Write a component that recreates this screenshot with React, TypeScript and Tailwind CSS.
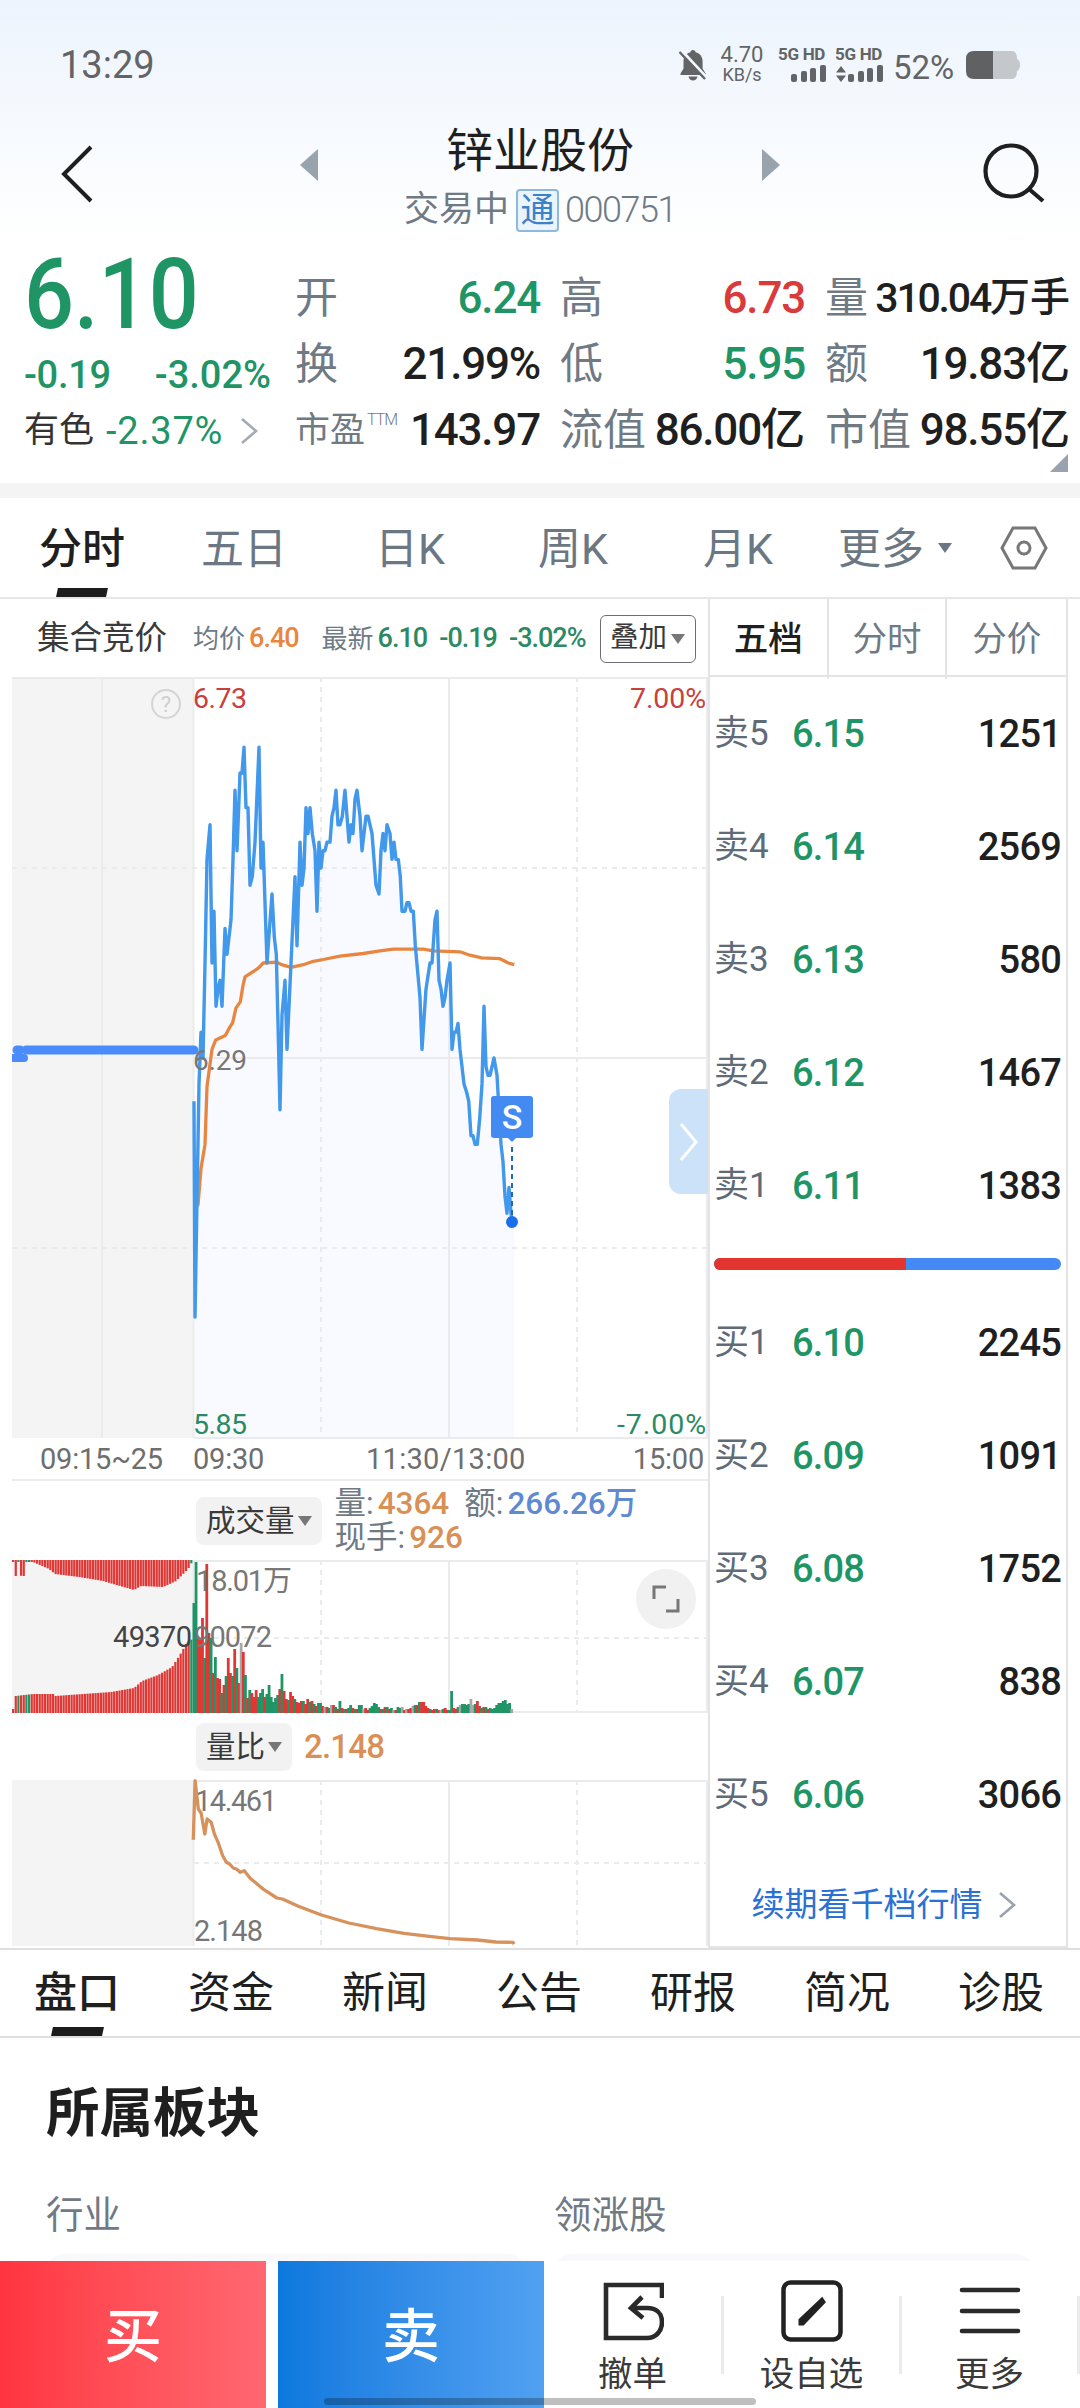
import React from 'react';

const quoteCells = [
  { label: '开', value: '6.24', color: 'text-[#1f9566]' },
  { label: '高', value: '6.73', color: 'text-[#d93a3a]' },
  { label: '量', value: '310.04', unit: '万手', color: 'text-[#1f1f1f]', small: true },
  { label: '换', value: '21.99%', color: 'text-[#1f1f1f]' },
  { label: '低', value: '5.95', color: 'text-[#1f9566]' },
  { label: '额', value: '19.83', unit: '亿', color: 'text-[#1f1f1f]' },
  { label: '市盈', sup: 'TTM', value: '143.97', color: 'text-[#1f1f1f]' },
  { label: '流值', value: '86.00', unit: '亿', color: 'text-[#1f1f1f]' },
  { label: '市值', value: '98.55', unit: '亿', color: 'text-[#1f1f1f]' },
];

const asks = [
  ['卖5', '6.15', '1251'],
  ['卖4', '6.14', '2569'],
  ['卖3', '6.13', '580'],
  ['卖2', '6.12', '1467'],
  ['卖1', '6.11', '1383'],
];

const bids = [
  ['买1', '6.10', '2245'],
  ['买2', '6.09', '1091'],
  ['买3', '6.08', '1752'],
  ['买4', '6.07', '838'],
  ['买5', '6.06', '3066'],
];

// [x in thirds of a pixel, ticks above the previous close]
const pricePoints = [
  [42, -5], [45, -30], [57, -3], [63, 3], [69, 0], [75, 11], [81, 23], [90, 27], [96, 11], [102, 17], [108, 6],
  [114, 8], [120, 9], [126, 6], [135, 15], [141, 12], [147, 14], [153, 16], [159, 23], [165, 31], [171, 24],
  [180, 33], [186, 33], [192, 36], [198, 29], [204, 29], [210, 20], [217, 21], [225, 25], [237, 36], [243, 22],
  [249, 25], [261, 11], [276, 19], [283, 14], [289, 12], [294, 4], [300, -6], [306, 5], [315, 9], [321, 1],
  [333, 11], [345, 21], [351, 13], [360, 25], [366, 20], [372, 22], [378, 29], [384, 26], [390, 29], [397, 26],
  [405, 24], [411, 17], [417, 25], [423, 22], [429, 24], [435, 24], [441, 25], [450, 25], [456, 28], [462, 29],
  [468, 31], [474, 27], [480, 27], [487, 28], [495, 31], [507, 25], [513, 27], [519, 26], [525, 30], [531, 31],
  [540, 28], [546, 24], [552, 26], [558, 28], [564, 28], [570, 27], [576, 26], [588, 20], [597, 19], [603, 24],
  [609, 26], [615, 24], [621, 27], [630, 26], [636, 23], [642, 25], [648, 23], [655, 23], [661, 21], [666, 17],
  [675, 17], [681, 18], [687, 18], [693, 17], [700, 17], [706, 13], [720, 7], [726, 1], [738, 8], [750, 11],
  [756, 11], [765, 16], [771, 17], [777, 9], [783, 8], [789, 6], [795, 7], [801, 9], [810, 11], [816, 1],
  [822, 3], [828, 3], [834, 4], [840, 1], [852, -3], [860, -4], [866, -5], [873, -9], [879, -9], [885, -10],
  [892, -10], [899, -7], [906, -3], [912, 6], [918, -1], [924, -2], [930, -2], [942, 0], [951, -2], [957, -6],
  [963, -10], [969, -12], [975, -16], [981, -18], [987, -15], [993, -18], [996, -19],
];

const avgPoints = [
  [48, -17], [54, -17], [63, -12.8], [75, -10], [81, -3.3], [96, 1], [107, 2.1], [136, 2.6], [150, 3.6],
  [158, 4.1], [168, 5.8], [181, 6.5], [189, 8.4], [195, 9.4], [235, 10.4], [250, 11], [290, 11.1], [305, 10.8],
  [333, 10.5], [370, 10.8], [400, 11.2], [430, 11.4], [480, 11.8], [550, 12.1], [600, 12.4], [640, 12.6],
  [730, 12.6], [760, 12.4], [840, 12.3], [870, 11.9], [905, 11.6], [960, 11.5], [985, 11], [1003, 10.8],
];

const toLine = (pts: number[][]) =>
  pts.map(([x, t]) => `${((x + 504) / 3).toFixed(1)},${(381 - t * 8.636).toFixed(1)}`).join(' ');

// one entry per traded minute: height, then r (up), g (down) or n (flat)
const volumeBars = (
  '110g 151g 75r 75r 95r 55g 149r 80r 75g 40r 56g 35r 34r 20g 28r 37g 55r 40r 37g 64r 45g 30r 70n 61r 38g ' +
  '15r 23g 20r 16r 23r 16g 20g 24g 16r 19g 28g 16g 11g 15g 18g 24r 39g 22r 14r 13g 21r 17r 14g 11r 10r 12r 12g ' +
  '9r 14r 11g 12r 9g 7r 10g 10g 7r 6n 6r 5g 8n 8r 6g 4r 12g 5r 4g 4r 5g 8g 5r 4g 4r 8g 8g 4n 5r 3r 5g 7g 10g ' +
  '9g 6g 4r 4g 6r 6g 4r 5g 3n 3r 6g 5g 6n 3r 4n 4r 5r 7n 8g 8r 11g 11r 11r 7r 5r 4g 3r 4r 4g 3r 3n 4g 5r 3r 3g 22g ' +
  '5r 4r 6g 8n 9g 9g 8g 9g 14n 8n 9g 12r 7r 5g 6r 6g 4r 5g 4g 5g 8g 10g 10g 12g 13g 9g 10g 4n'
).split(' ');

const volumeColor = { r: '#e03735', g: '#1f9566', n: '#a8a8a8' } as Record<string, string>;

const interpolate = (stops: number[][], x: number) => {
  const i = Math.max(1, stops.findIndex((s) => s[0] >= x));
  const [x0, y0] = stops[i - 1];
  const [x1, y1] = stops[i];
  return y0 + ((y1 - y0) * (x - x0)) / (x1 - x0);
};

const auctionTop = [
  [0, 2], [2, 2], [2.5, 16], [3, 16], [4, 2], [7, 2], [8, 16], [12, 16], [13, 2], [20, 2], [36, 9], [42, 14], [66, 17],
  [90, 21], [100, 24], [121, 30], [128, 26], [150, 27], [163, 21], [175, 9], [179, 2], [190, 2],
];
const auctionBottom = [
  [0, 4], [2, 4], [2.5, 17], [20, 19], [40, 19], [42, 17], [70, 19], [98, 21], [121, 25], [129, 32], [145, 38],
  [159, 46], [168, 60], [174, 71], [190, 80],
];

const ratioPoints = [
  [421, 362], [425, 185], [432, 270], [438, 282], [446, 345], [451, 300], [460, 310], [467, 345], [475, 370],
  [485, 410], [493, 430], [500, 435], [508, 447], [515, 450], [523, 460], [532, 455], [545, 478], [575, 512],
  [603, 537], [615, 540], [650, 562], [700, 588], [760, 612], [820, 629], [880, 643], [940, 653], [980, 659],
  [1040, 663], [1080, 669], [1117, 670], [1120, 675],
].map(([x, y]) => `${(x / 2.178 - 12).toFixed(1)},${(y / 3 - 61).toFixed(1)}`).join(' ');

const Caret = ({ className = '' }: { className?: string }) => (
  <svg className={className} width="14" height="10" viewBox="0 0 14 10">
    <path d="M0 0h14L7 10z" fill="currentColor" />
  </svg>
);

const ChevronRight = ({ className = '' }: { className?: string }) => (
  <svg className={className} width="18" height="28" viewBox="0 0 18 28" fill="none">
    <path d="M2 2l14 12L2 26" stroke="currentColor" strokeWidth="2.6" />
  </svg>
);

const StatusBar = () => (
  <div className="flex h-[130px] items-center pl-[60px] pr-[60px] text-[#626466]">
    <span className="text-[38px] leading-none">13:29</span>
    <div className="ml-auto flex items-center">
      <svg width="30" height="32" viewBox="0 0 30 32" fill="currentColor">
        <path d="M15 1c1.500 0 2.600 1 2.600 2.300 4.600 1.200 7 4.700 7 9.200v7l3 5v1.500H2.500V24.500l3-5v-7C5.500 8 8 4.500 12.400 3.300 12.400 2 13.500 1 15 1z" />
        <path d="M10.500 27.500h9c-.5 2.500-2.300 4-4.500 4s-4-1.500-4.500-4z" />
        <path d="M4 2l25 27" stroke="#f4f8fd" strokeWidth="3" />
        <path d="M1.500 3l25.500 27" stroke="currentColor" strokeWidth="2.400" />
      </svg>
      <div className="ml-[10px] flex w-[48px] flex-col text-center">
        <span className="text-[22px] leading-[20px]">4.70</span>
        <span className="text-[18px] leading-[20px]">KB/s</span>
      </div>
      <div className="ml-3 flex gap-2">
        {[0, 1].map((i) => (
          <div key={i} className="flex flex-col items-end gap-[5px]">
            <span className="w-[49px] whitespace-nowrap text-[17px] font-bold leading-[12px] tracking-[-0.3px]">5G HD</span>
            <svg width="49" height="18" viewBox="0 0 49 18" fill="currentColor">
              {i === 1 && <path d="M6 1l5 6.500H1zM6 17l5-6.500H1z" />}
              <rect x="13" y="9" width="6" height="8" rx="2" />
              <rect x="23" y="6" width="6" height="11" rx="2" />
              <rect x="32" y="3" width="6" height="14" rx="2" />
              <rect x="42" y="0" width="6" height="17" rx="2" />
            </svg>
          </div>
        ))}
      </div>
      <span className="ml-[9px] mt-1 w-[65px] whitespace-nowrap text-[33px] leading-none">52%</span>
      <svg className="ml-2" width="54" height="28" viewBox="0 0 54 28">
        <path d="M8 0h38q5 0 5 8q3 1 3 6t-3 6q0 8-5 8H27V0z" fill="#c4c8cd" />
        <path d="M27 0H8Q0 0 0 8v12q0 8 8 8h19z" fill="#5f6163" />
      </svg>
    </div>
  </div>
);

const TitleBar = () => (
  <div className="flex h-[114px] justify-between pl-[60px] pr-[34px]">
    <svg className="mt-[14px]" width="34" height="60" viewBox="0 0 34 60" fill="none">
      <path d="M31 3L4 30l27 27" stroke="#1f1f1f" strokeWidth="4" />
    </svg>
    <div className="ml-[4px] flex w-[480px] justify-between">
      <svg className="mt-[19px]" width="18" height="32" viewBox="0 0 18 32">
        <path d="M18 0v32L0 16z" fill="#99a3ad" />
      </svg>
      <div className="flex flex-col items-center">
        <h1 className="mt-[-4px] text-[47px] leading-[50px] text-[#1f1f1f]">锌业股份</h1>
        <div className="mt-[12px] flex items-center text-[35px] leading-[44px] text-[#6f7a85]">
          <span>交易中</span>
          <span className="ml-[7px] flex size-[43px] items-center justify-center rounded border-2 border-[#8db8e0] bg-[#eaf4fd] text-[34px] leading-none text-[#3b82c8]">通</span>
          <span className="ml-[6px] text-[36px] font-light tracking-[-1.5px]">000751</span>
        </div>
      </div>
      <svg className="mt-[19px]" width="18" height="32" viewBox="0 0 18 32">
        <path d="M0 0v32l18-16z" fill="#99a3ad" />
      </svg>
    </div>
    <svg className="mt-[12px]" width="64" height="62" viewBox="0 0 64 62" fill="none" stroke="#1f1f1f" strokeWidth="4.200">
      <circle cx="29" cy="29" r="25.500" />
      <path d="M47 47l14 12" />
    </svg>
  </div>
);

const Quote = () => (
  <section className="flex h-[239px] pl-[24px] pr-[10px]">
    <div className="w-[271px] shrink-0 text-[#1f9566]">
      <div className="mt-[-1px] h-[102px] origin-left scale-x-[.89] text-[99px] font-medium leading-[102px]">6.10</div>
      <div className="mt-[7px] flex h-[46px] items-center text-[38px] font-medium">
        <span className="tracking-[-0.3px]">-0.19</span>
        <span className="ml-[44px]">-3.02%</span>
      </div>
      <div className="mt-[9px] flex h-[48px] items-center text-[35px] text-[#333]">
        <span>有色</span>
        <span className="ml-[12px] text-[38px] tracking-[0.8px] text-[#1f9566]">-2.37%</span>
        <ChevronRight className="ml-[17px] text-[#a3acb5]" />
      </div>
    </div>
    <div className="relative mt-[21px] grid h-[198px] flex-1 grid-cols-3 gap-x-5">
      {quoteCells.map((c) => (
        <div key={c.label} className="flex h-[66px] items-center justify-between whitespace-nowrap leading-none">
          <span className={c.sup ? 'flex text-[35px] text-[#6f7a85]' : 'text-[43px] text-[#6f7a85]'}>
            {c.label}
            {c.sup && <sup className="ml-[2px] mt-[7px] text-[16px] font-light leading-none tracking-[-1px]">{c.sup}</sup>}
          </span>
          <span className={`flex items-center font-medium ${c.color}`}>
            <span className={c.small ? 'text-[41px] tracking-[-2.2px]' : 'text-[44px] tracking-[-1.2px]'}>{c.value}</span>
            {c.unit && <span className={c.small ? 'text-[40px]' : 'text-[44px]'}>{c.unit}</span>}
          </span>
        </div>
      ))}
      <svg className="absolute bottom-[-9px] right-[2px]" width="18" height="18" viewBox="0 0 18 18">
        <path d="M18 0v18H0z" fill="#9aa3ad" />
      </svg>
    </div>
  </section>
);

const PeriodTabs = () => (
  <nav className="flex h-[101px] items-start border-b-2 border-[#e6e6e6] text-[43px] leading-[103px] text-[#6b7783]">
    <div className="flex w-[164px] flex-col items-center font-medium text-[#1f1f1f]">
      <span className="h-[90px]">分时</span>
      <span className="h-[9px] w-[50px] -skew-x-12 bg-[#1c1c1c]" />
    </div>
    <span className="w-[160px] text-center">五日</span>
    <span className="w-[172px] text-center">日K</span>
    <span className="w-[154px] text-center">周K</span>
    <span className="w-[176px] text-center">月K</span>
    <div className="ml-[12px] flex h-[99px] items-center">
      <span className="mt-[4px]">更多</span>
      <Caret className="ml-[14px]" />
    </div>
    <svg className="ml-[48px] mt-[28px]" width="48" height="44" viewBox="0 0 48 44" fill="none" stroke="#777" strokeWidth="3">
      <path d="M13 2h22l11 20-11 20H13L2 22z" />
      <circle cx="24" cy="22" r="6" />
    </svg>
  </nav>
);

const VerticalGrid = ({ height }: { height: number }) => (
  <g stroke="#ebebed" strokeWidth="2">
    <path d={`M181.500 0V${height}M437 0V${height}M695 0V${height}`} />
    <path d={`M309 0V${height}M565 0V${height}`} strokeDasharray="5 5" />
  </g>
);

const PriceChart = () => (
  <div className="relative h-[763px]">
    <svg width="696" height="763" viewBox="0 -1 696 763" className="block overflow-visible">
      <rect x="0" y="0" width="182" height="761" fill="#f4f4f4" />
      <polygon points={`181.500,761 ${toLine(pricePoints)} 502,545 502,761`} fill="#f8faff" />
      <VerticalGrid height={761} />
      <g stroke="#ebebed" strokeWidth="2">
        <path d="M90 0v761M0 1h696M182 381h514M182 761h514" />
        <path d="M0 191h696M0 571h696" strokeDasharray="5 5" />
      </g>
      <path d="M5 373h3M14 373h168" stroke="#4a8cfb" strokeWidth="9" strokeLinecap="round" />
      <path d="M0 381h12" stroke="#4a8cfb" strokeWidth="8" />
      <circle cx="12" cy="381" r="4" fill="#4a8cfb" />
      <g fontSize="28.500">
        <text x="181" y="31" fill="#c93f3c" textLength="54">6.73</text>
        <text x="618" y="31" fill="#c93f3c" textLength="76">7.00%</text>
        <text x="181" y="757" fill="#2b8a63" textLength="54">5.85</text>
        <text x="605" y="757" fill="#2b8a63" textLength="89">-7.00%</text>
      </g>
      <polyline points={toLine(avgPoints)} fill="none" stroke="#e88640" strokeWidth="3.300" strokeLinejoin="round" />
      <polyline points={toLine(pricePoints)} fill="none" stroke="#4298ea" strokeWidth="3.400" strokeLinejoin="round" />
      <text x="181" y="393" fill="#777" fontSize="28" textLength="54">6.29</text>
      <circle cx="154" cy="27" r="14" fill="none" stroke="#d4d4d4" strokeWidth="2" />
      <text x="154" y="35" fill="#d0d0d0" fontSize="22" textAnchor="middle">?</text>
      <path d="M500 470v68" stroke="#2566ae" strokeWidth="2" strokeDasharray="5 4" />
      <circle cx="500" cy="545" r="6" fill="#1a6fe8" />
      <path d="M482 419h36q3 0 3 3v36q0 3-3 3h-14l-4 4-4-4h-14q-3 0-3-3v-36q0-3 3-3z" fill="#438af3" />
      <text x="500" y="452" fill="#fff" fontSize="34" fontWeight="500" textAnchor="middle">S</text>
    </svg>
    <div className="absolute right-0 top-[413px] flex h-[105px] w-[39px] items-center justify-center rounded-l-xl bg-[#cbe2f8]">
      <svg width="20" height="40" viewBox="0 0 20 40" fill="none">
        <path d="M2 2l15 18L2 38" stroke="#fff" strokeWidth="3" />
      </svg>
    </div>
  </div>
);

const VolumeChart = () => (
  <div className="relative h-[153px]">
    <svg width="696" height="153" viewBox="0 0 696 153" className="block overflow-visible">
      <rect width="182" height="153" fill="#f4f4f4" />
      <VerticalGrid height={153} />
      <g stroke="#ebebed" strokeWidth="2">
        <path d="M182 1h514M182 152h514" />
        <path d="M182 78h514" strokeDasharray="5 5" />
      </g>
      {Array.from({ length: 68 }, (_, i) => {
        const x = i * 2.66;
        const top = interpolate(auctionTop, x);
        const bottom = interpolate(auctionBottom, x);
        const fill = [2, 5, 6, 67].includes(i) ? '#1f9566' : '#e03735';
        return (
          <g key={i} fill={fill}>
            <rect x={x} y="0" width="2.200" height={top} />
            <rect x={x} y={153 - bottom} width="2.200" height={bottom} />
          </g>
        );
      })}
      {volumeBars.map((bar, i) => {
        const h = parseInt(bar, 10);
        return <rect key={i} x={180.5 + (i * 320) / volumeBars.length} y={153 - h} width="2.800" height={h} fill={volumeColor[bar.slice(-1)]} />;
      })}
      <g fontSize="29">
        <text x="184" y="31" fill="#777" textLength="96">18.01万</text>
        <text x="101" y="87" fill="#444" textLength="79">49370</text>
        <text x="182" y="87" fill="#777" textLength="78">90072</text>
      </g>
    </svg>
    <div className="absolute right-[12px] top-[9px] flex size-[60px] items-center justify-center rounded-full bg-[#f1f1f1]">
      <svg width="28" height="28" viewBox="0 0 28 28" fill="none" stroke="#777" strokeWidth="3">
        <path d="M2 14V2h12M14 26h12V14" />
      </svg>
    </div>
  </div>
);

const RatioChart = () => (
  <svg width="696" height="166" viewBox="0 0 696 166" className="block overflow-visible">
    <rect width="182" height="166" fill="#f4f4f4" />
    <VerticalGrid height={166} />
    <g stroke="#ebebed" strokeWidth="2">
      <path d="M182 1h514" />
      <path d="M182 83h514" strokeDasharray="5 5" />
    </g>
    <text x="183" y="31" fill="#777" fontSize="29" textLength="82">14.461</text>
    <text x="182" y="161" fill="#777" fontSize="29" textLength="69">2.148</text>
    <polyline points={ratioPoints} fill="none" stroke="#d6915c" strokeWidth="3.300" strokeLinejoin="round" />
  </svg>
);

const Indicator = ({ name }: { name: string }) => (
  <div className="flex h-12 items-center rounded-lg bg-[#f2f2f2] px-[10px] text-[29.5px] text-[#3a3a3a]">
    <span className="pt-px">{name}</span>
    <Caret className="ml-[3px] text-[#777]" />
  </div>
);

const ChartColumn = () => (
  <div className="w-[696px] shrink-0">
    <div className="flex h-[77px] items-center whitespace-nowrap pl-[25px] pt-[2px] leading-none">
      <span className="text-[32.5px] text-[#3a3a3a]">集合竞价</span>
      <span className="ml-[26px] text-[26px] text-[#6f7a85]">均价</span>
      <span className="ml-[4px] text-[27px] font-medium tracking-[-1px] text-[#e88640]">6.40</span>
      <span className="ml-[23px] text-[26px] text-[#6f7a85]">最新</span>
      <div className="ml-[4px] flex w-[208px] justify-between text-[27px] font-medium tracking-[-1px] text-[#2b8a63]">
        <span>6.10</span>
        <span>-0.19</span>
        <span>-3.02%</span>
      </div>
      <button className="ml-[14px] flex h-[48px] w-[96px] items-center justify-center rounded-md border-[1.5px] border-[#6b6f75] text-[28.5px] text-[#3a3a3a]">
        叠加
        <Caret className="ml-1 text-[#777]" />
      </button>
    </div>
    <PriceChart />
    <div className="flex h-[42px] items-center border-b-2 border-[#ebebed] text-[29px] leading-none tracking-[-0.2px] text-[#6e6e6e]">
      <span className="ml-[28px] w-[153px]">09:15~25</span>
      <span className="w-[173px]">09:30</span>
      <span className="tracking-[0.3px]">11:30/13:00</span>
      <span className="ml-auto mr-[4px]">15:00</span>
    </div>
    <div className="flex h-[79px] items-center pl-[184px]">
      <Indicator name="成交量" />
      <div className="ml-[13px] whitespace-nowrap pt-px text-[31.5px] leading-[34px] text-[#6f7a85]">
        <div className="flex">
          量:<span className="ml-[4px] font-medium text-[#d98f55]">4364</span>
          <span className="ml-[15px]">额:</span>
          <span className="ml-[4px] font-medium text-[#5f8ad2]">266.26万</span>
        </div>
        <div className="flex">
          现手:<span className="ml-[4px] font-medium text-[#d98f55]">926</span>
        </div>
      </div>
    </div>
    <VolumeChart />
    <div className="flex h-[67px] items-center pl-[184px]">
      <Indicator name="量比" />
      <span className="ml-[12px] text-[33px] font-medium tracking-[-0.8px] text-[#d98f55]">2.148</span>
    </div>
    <RatioChart />
  </div>
);

const BookRow = ({ row }: { row: string[] }) => (
  <div className="flex h-[113px] items-center leading-none">
    <span className="w-[78px] text-[35px] text-[#5f6b77]">{row[0]}</span>
    <span className="text-[38px] font-medium tracking-[-0.8px] text-[#1f9566]">{row[1]}</span>
    <span className="ml-auto text-[38px] font-medium tracking-[-0.8px] text-[#1f1f1f]">{row[2]}</span>
  </div>
);

const OrderBook = () => (
  <div className="flex w-[360px] flex-col border-x-2 border-b-2 border-[#e4e4e6]">
    <div className="grid h-[78px] grid-cols-3 divide-x-2 divide-[#e4e4e6] border-b-2 border-[#e4e4e6] text-center text-[34.5px] leading-[80px] text-[#6f7a85]">
      <span className="font-medium text-[#1f1f1f]">五档</span>
      <span>分时</span>
      <span>分价</span>
    </div>
    <div className="pl-[4px] pr-[5px]">
      {asks.map((row) => (
        <BookRow key={row[0]} row={row} />
      ))}
      <div className="mt-[16px] flex h-[12px] overflow-hidden rounded-full bg-[#438af7]">
        <div className="w-[55.2%] bg-[#e3342f]" />
      </div>
      <div className="mt-[16px]">
        {bids.map((row) => (
          <BookRow key={row[0]} row={row} />
        ))}
      </div>
    </div>
    <div className="flex flex-1 items-center justify-center pr-[9px] pt-3 text-[33px] text-[#2b70d3]">
      续期看千档行情
      <ChevronRight className="ml-[15px] text-[#9aa3ad]" />
    </div>
  </div>
);

const InfoTabs = () => (
  <nav className="flex h-[90px] border-y-2 border-[#dfdfdf] text-[43px] leading-[86px] text-[#1f1f1f]">
    {['盘口', '资金', '新闻', '公告', '研报', '简况', '诊股'].map((tab, i) => (
      <div key={tab} className="flex w-[154px] shrink-0 flex-col items-center">
        <span className={i === 0 ? 'h-[77px] font-medium' : 'h-[77px]'}>{tab}</span>
        {i === 0 && <span className="h-[9px] w-[51px] -skew-x-12 bg-[#1c1c1c]" />}
      </div>
    ))}
  </nav>
);

const Sectors = () => (
  <section className="h-[223px] overflow-hidden px-[46px]">
    <h2 className="mt-[39px] text-[53.5px] font-bold leading-[74px] text-[#1f1f1f]">所属板块</h2>
    <div className="mt-[37px] grid grid-cols-2 gap-x-7 text-[37.5px] leading-[54px] text-[#6f7a85]">
      <span>行业</span>
      <span>领涨股</span>
      <div className="mt-[12px] h-20 rounded-[18px] bg-[#f9f9fb]" />
      <div className="mt-[12px] h-20 rounded-[18px] bg-[#f9f9fb]" />
    </div>
  </section>
);

const ActionBar = () => (
  <footer className="relative flex h-[147px] bg-white">
    <button className="w-[267px] bg-linear-to-r from-[#ff3440] to-[#ff6771] pt-1.5 text-[58px] font-medium text-white">买</button>
    <button className="ml-3 w-[267px] bg-linear-to-r from-[#0a78de] to-[#50a1f1] pt-1.5 text-[58px] font-medium text-white">卖</button>
    <div className="flex flex-1 text-[34.5px] leading-[44px] text-[#3a3a3a]">
      <div className="flex w-[177px] flex-col items-center pt-[19px]">
        <svg width="62" height="62" viewBox="0 0 62 62" fill="none" stroke="#2a2a2a" strokeWidth="4.600">
          <path d="M60 18V5H4v53h41c9 0 15-7 15-16s-6-14-15-14H29" />
          <path d="M40 17L29 28l12 10" />
        </svg>
        <span className="mt-[10px]">撤单</span>
      </div>
      <div className="mt-[35px] h-[78px] w-[3px] bg-[#ebebeb]" />
      <div className="flex w-[175px] flex-col items-center pt-[19px]">
        <svg width="62" height="62" viewBox="0 0 62 62" fill="none" stroke="#222">
          <rect x="2.500" y="2.500" width="57" height="57" rx="7" strokeWidth="4.500" />
          <path d="M19 44v-4l22-21 2 3-21 22z" strokeWidth="3" fill="#222" />
        </svg>
        <span className="mt-[10px]">设自选</span>
      </div>
      <div className="mt-[35px] h-[78px] w-[3px] bg-[#ebebeb]" />
      <div className="flex w-[175px] flex-col items-center pt-[19px]">
        <svg width="62" height="62" viewBox="0 0 62 62" stroke="#2a2a2a" strokeWidth="4.600" strokeLinecap="round">
          <path d="M3 10h56M3 31h56M3 51h56" />
        </svg>
        <span className="mt-[10px]">更多</span>
      </div>
      <div className="mt-[35px] h-[78px] w-[3px] shrink-0 bg-[#ebebeb]" />
    </div>
    <div className="absolute bottom-[3px] left-[324px] h-[7px] w-[432px] rounded-full bg-black/25" />
  </footer>
);

const App = () => {
  return (
    <div className="h-[2408px] w-[1080px] overflow-hidden bg-white font-['Roboto','Noto_Sans_CJK_SC',sans-serif]">
      <header className="h-[244px] bg-linear-to-b from-[#edf4fd] to-white">
        <StatusBar />
        <TitleBar />
      </header>
      <Quote />
      <div className="h-[15px] bg-[#f4f4f4]" />
      <PeriodTabs />
      <main className="flex h-[1349px] pl-3">
        <ChartColumn />
        <OrderBook />
      </main>
      <InfoTabs />
      <Sectors />
      <ActionBar />
    </div>
  );
};

export default App;
